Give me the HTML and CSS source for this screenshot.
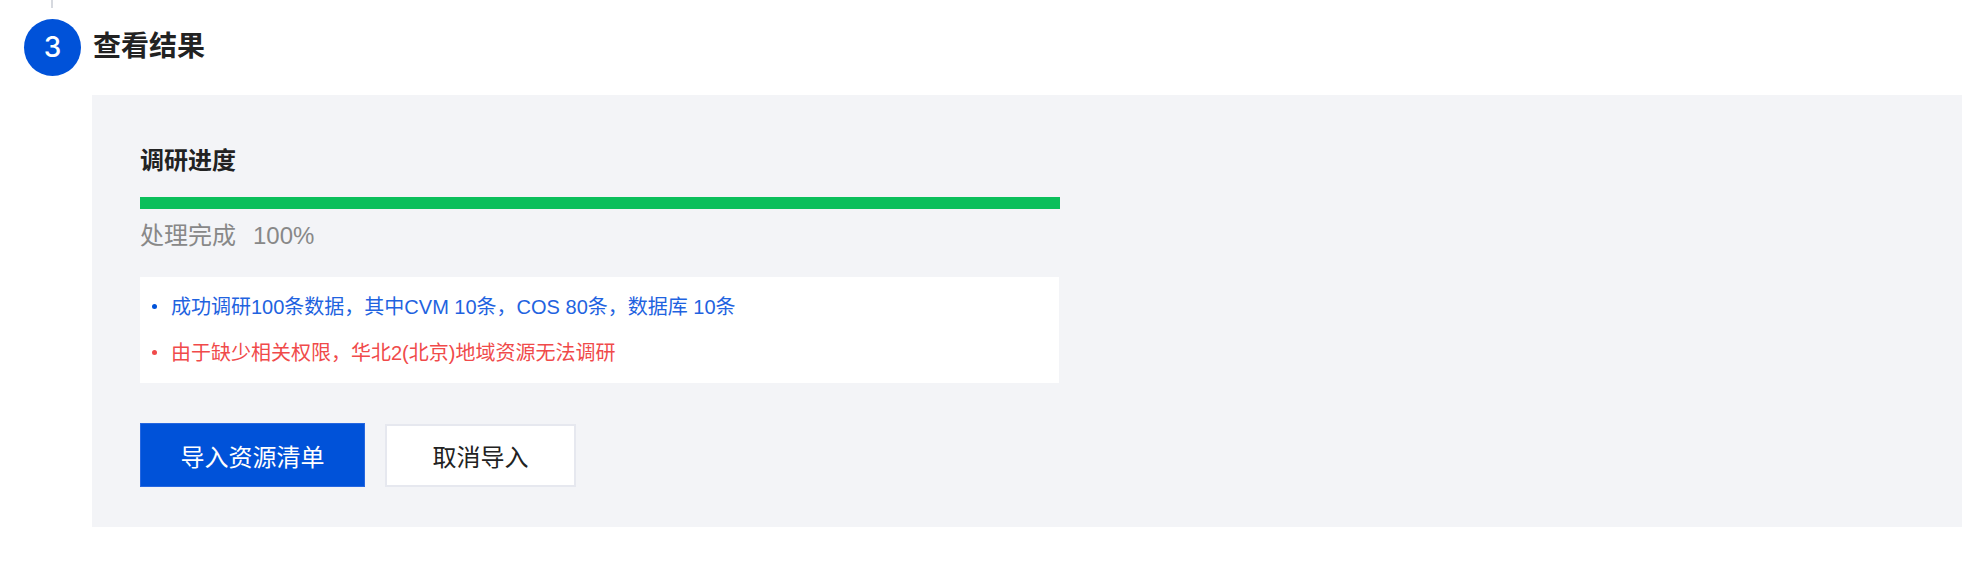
FILE: index.html
```html
<!DOCTYPE html>
<html lang="zh-CN">
<head>
<meta charset="utf-8">
<title>查看结果</title>
<link rel="stylesheet" href="styles.css">
</head>
<body>
<div class="step">
  <div class="rail"><span class="rail-line"></span></div>
  <div class="step-head">
    <span class="step-num">3</span>
    <h2 class="step-title">查看结果</h2>
  </div>
  <section class="panel">
    <h3 class="panel-title">调研进度</h3>
    <div class="progress"><div class="progress-fill" style="width:100%"></div></div>
    <div class="progress-text"><span>处理完成</span><span class="pct">100%</span></div>
    <ul class="result">
      <li class="ok">成功调研100条数据，其中CVM 10条，COS 80条，数据库 10条</li>
      <li class="err">由于缺少相关权限，华北2(北京)地域资源无法调研</li>
    </ul>
    <div class="actions">
      <button class="btn btn-primary">导入资源清单</button>
      <button class="btn btn-default">取消导入</button>
    </div>
  </section>
</div>
</body>
</html>
```

FILE: styles.css
```css
* { box-sizing: border-box; }
html, body { margin: 0; padding: 0; background: #fff; }
body {
  font-family: "Liberation Sans", "Noto Sans CJK SC", sans-serif;
  color: #222;
  width: 1962px;
  height: 586px;
  overflow: hidden;
}
.step { display: flex; flex-direction: column; }
.rail { height: 19px; padding-left: 51px; }
.rail-line { display: block; width: 2px; height: 8px; background: #d6d9df; }
.step-head {
  display: flex;
  align-items: center;
  gap: 12px;
  padding-left: 24px;
  height: 56px;
}
.step-num {
  width: 57px;
  height: 57px;
  border-radius: 50%;
  background: #0052d9;
  color: #fff;
  font-family: "Inter", "Liberation Sans", sans-serif;
  font-weight: 500;
  font-size: 28px;
  display: flex;
  align-items: center;
  justify-content: center;
  flex: none;
}
.step-title {
  margin: 0;
  font-size: 28px;
  font-weight: 600;
  color: #222;
  line-height: 40px;
}
.panel {
  margin: 20px 0 0 92px;
  background: #f3f4f7;
  height: 432px;
  padding: 48px 0 0 48px;
}
.panel-title {
  margin: 0;
  font-size: 24px;
  font-weight: 600;
  line-height: 36px;
  color: #222;
}
.progress {
  margin-top: 18px;
  width: 920px;
  height: 12px;
  background: #e3e6eb;
}
.progress-fill { height: 100%; background: #0abf5b; }
.progress-text {
  margin-top: 9px;
  font-size: 24px;
  line-height: 36px;
  color: #888;
  display: flex;
  gap: 17px;
}
.result {
  list-style: none;
  margin: 23px 0 0 0;
  width: 919px;
  background: #fff;
  padding: 7px 0 7px 31px;
  font-size: 20px;
  line-height: 46px;
}
.result li { position: relative; }
.result li::before {
  content: "";
  position: absolute;
  left: -19px;
  top: 20px;
  width: 5px;
  height: 5px;
  border-radius: 50%;
}
.result .ok { color: #1f63e0; }
.result .ok::before { background: #0052d9; }
.result .err { color: #f04a4a; }
.result .err::before { background: #f04a4a; }
.actions {
  margin-top: 40px;
  display: flex;
  gap: 20px;
  align-items: center;
}
.btn {
  font-family: inherit;
  font-size: 24px;
  height: 64px;
  padding: 0;
  cursor: pointer;
  display: flex;
  align-items: center;
  justify-content: center;
}
.btn-primary {
  width: 225px;
  background: #0052d9;
  color: #fff;
  border: 1px solid #2667e0;
}
.btn-default {
  width: 191px;
  height: 63px;
  background: #fff;
  color: #222;
  border: 2px solid #e6e8ef;
}
```
